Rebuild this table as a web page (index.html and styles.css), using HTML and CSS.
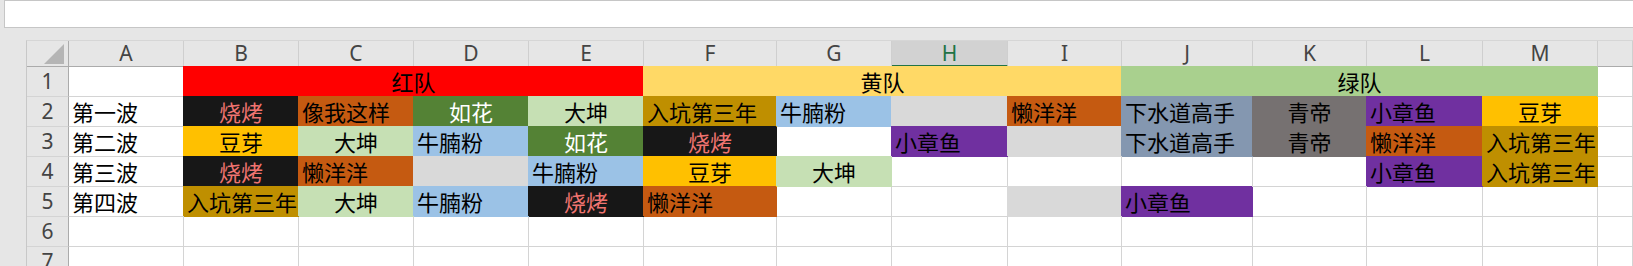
FILE: index.html
```html
<!DOCTYPE html>
<html lang="zh-CN">
<head>
<meta charset="utf-8">
<title>Sheet</title>
<link rel="stylesheet" href="styles.css">
</head>
<body>
<div class="formula"></div>
<div class="sheet">
  <div class="corner"><svg width="21" height="21" viewBox="0 0 21 21"><polygon points="20,1 20,21 0,21" fill="#b5b5b5"/></svg></div>
  <div class="ch">A</div><div class="ch">B</div><div class="ch">C</div><div class="ch">D</div><div class="ch">E</div><div class="ch">F</div><div class="ch">G</div><div class="ch sel">H</div><div class="ch">I</div><div class="ch">J</div><div class="ch">K</div><div class="ch">L</div><div class="ch">M</div><div class="ch"></div>

  <div class="rh">1</div><div class="c"></div><div class="c red m4 ctr">红队</div><div class="c yel m4 ctr">黄队</div><div class="c grn m4 ctr">绿队</div><div class="c"></div>

  <div class="rh">2</div><div class="c">第一波</div><div class="c k ctr pink">烧烤</div><div class="c o">像我这样</div><div class="c dg ctr wt">如花</div><div class="c lg ctr">大坤</div><div class="c au">入坑第三年</div><div class="c bl">牛腩粉</div><div class="c gy"></div><div class="c o">懒洋洋</div><div class="c sl">下水道高手</div><div class="c dk ctr">青帝</div><div class="c pu">小章鱼</div><div class="c am ctr">豆芽</div><div class="c"></div>

  <div class="rh">3</div><div class="c">第二波</div><div class="c am ctr">豆芽</div><div class="c lg ctr">大坤</div><div class="c bl">牛腩粉</div><div class="c dg ctr wt">如花</div><div class="c k ctr pink">烧烤</div><div class="c"></div><div class="c pu">小章鱼</div><div class="c gy"></div><div class="c sl">下水道高手</div><div class="c dk ctr">青帝</div><div class="c o">懒洋洋</div><div class="c au">入坑第三年</div><div class="c"></div>

  <div class="rh">4</div><div class="c">第三波</div><div class="c k ctr pink">烧烤</div><div class="c o">懒洋洋</div><div class="c gy"></div><div class="c bl">牛腩粉</div><div class="c am ctr">豆芽</div><div class="c lg ctr">大坤</div><div class="c"></div><div class="c"></div><div class="c"></div><div class="c"></div><div class="c pu">小章鱼</div><div class="c au">入坑第三年</div><div class="c"></div>

  <div class="rh">5</div><div class="c">第四波</div><div class="c au">入坑第三年</div><div class="c lg ctr">大坤</div><div class="c bl">牛腩粉</div><div class="c k ctr pink">烧烤</div><div class="c o">懒洋洋</div><div class="c"></div><div class="c"></div><div class="c gy"></div><div class="c pu">小章鱼</div><div class="c"></div><div class="c"></div><div class="c"></div><div class="c"></div>

  <div class="rh">6</div><div class="c"></div><div class="c"></div><div class="c"></div><div class="c"></div><div class="c"></div><div class="c"></div><div class="c"></div><div class="c"></div><div class="c"></div><div class="c"></div><div class="c"></div><div class="c"></div><div class="c"></div><div class="c"></div>

  <div class="rh">7</div><div class="c"></div><div class="c"></div><div class="c"></div><div class="c"></div><div class="c"></div><div class="c"></div><div class="c"></div><div class="c"></div><div class="c"></div><div class="c"></div><div class="c"></div><div class="c"></div><div class="c"></div><div class="c"></div>
</div>
</body>
</html>
```

FILE: styles.css
```css
html, body {
  margin: 0;
  padding: 0;
  background: #e6e6e6;
}

.formula {
  margin-left: 4px;
  height: 28px;
  box-sizing: border-box;
  background: #ffffff;
  border: 1px solid #c6c6c6;
  border-right: none;
}

.sheet {
  margin: 12px 0 0 26px;
  display: grid;
  grid-template-columns: 42px 115px 115px 115px 115px 115px 133px 115px 116px 114px 131px 114px 116px 115px 1fr;
  grid-template-rows: 26px repeat(7, 30px);
  border-top: 1px solid #d6d6d6;
  border-left: 1px solid #c8c8c8;
  font-family: "Noto Sans CJK SC", "Noto Sans", sans-serif;
}

.corner {
  box-sizing: border-box;
  background: #e6e6e6;
  border-right: 1px solid #ababab;
  border-bottom: 1px solid #ababab;
  display: flex;
  align-items: flex-end;
  justify-content: flex-end;
  padding: 0 3px 2px 0;
}
.corner svg { display: block; }

.ch {
  box-sizing: border-box;
  background: #e6e6e6;
  border-right: 1px solid #cfcfcf;
  border-bottom: 1px solid #ababab;
  color: #444444;
  font-family: "Noto Sans", "Open Sans", sans-serif;
  font-size: 21px;
  line-height: 25px;
  text-align: center;
}
.ch.sel {
  background: #d2d2d2;
  color: #217346;
  border-bottom: 2px solid #217346;
  line-height: 24px;
}

.rh {
  box-sizing: border-box;
  background: #e6e6e6;
  border-right: 1px solid #ababab;
  border-bottom: 1px solid #d4d4d4;
  color: #444444;
  font-family: "Noto Sans", "Open Sans", sans-serif;
  font-size: 21px;
  line-height: 29px;
  text-align: center;
}

.c {
  box-sizing: border-box;
  background: #ffffff;
  border-right: 1px solid #d4d4d4;
  border-bottom: 1px solid #d4d4d4;
  color: #000000;
  font-size: 22px;
  line-height: 29px;
  padding: 0 3px;
  white-space: nowrap;
  overflow: visible;
}
.ctr { text-align: center; padding: 0; }
.m4 { grid-column: span 4; }

.red, .yel, .grn, .k, .o, .dg, .lg, .au, .bl, .gy, .am, .sl, .dk, .pu {
  border-color: var(--f);
  background: var(--f);
  box-shadow: -1px -1px 0 0 var(--f);
}
.red { --f: #ff0000; }
.yel { --f: #ffd966; }
.grn { --f: #a9d08e; }
.k   { --f: #171717; }
.o   { --f: #c55a11; }
.dg  { --f: #548235; }
.lg  { --f: #c6e0b4; }
.au  { --f: #bf8f00; }
.bl  { --f: #9bc2e6; }
.gy  { --f: #d9d9d9; }
.am  { --f: #ffc000; }
.sl  { --f: #8497b0; }
.dk  { --f: #767171; }
.pu  { --f: #7030a0; }

.pink { color: #f07470; }
.wt { color: #ffffff; }
```
